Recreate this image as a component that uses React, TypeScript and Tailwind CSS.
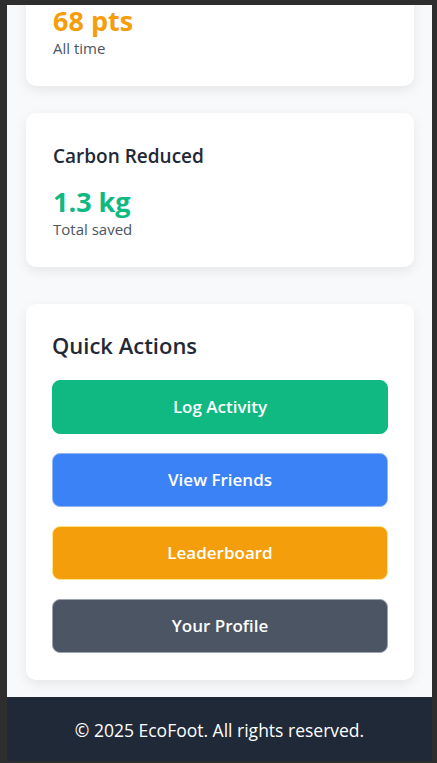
import React from "react";

function StatCard({ title, value, sub, color }: { title: string; value: string; sub: string; color: string }) {
  return (
    <div className="rounded-[10px] bg-white px-[27px] pt-[29px] pb-[27px] shadow-[0_4px_12px_rgba(0,0,0,0.08)]">
      <h3 className="text-[19px] leading-[29px] font-semibold text-[#1f2937]">{title}</h3>
      <div className={`mt-[14px] text-[27px] leading-[33px] font-bold ${color}`}>{value}</div>
      <div className="text-[15px] leading-[22px] text-[#4b5563]">{sub}</div>
    </div>
  );
}

export default function App() {
  const buttons = [
    { label: "Log Activity", cls: "bg-[#10b981] border-[#10b981]" },
    { label: "View Friends", cls: "bg-[#3b82f6] border-[#93b4f5]" },
    { label: "Leaderboard", cls: "bg-[#f59e0b] border-[#fde68a]" },
    { label: "Your Profile", cls: "bg-[#4b5563] border-[#9ca3af]" },
  ];
  return (
    <div
      className="h-[763px] w-[437px] overflow-hidden bg-[#2e2e2e] pt-[5px] pl-[7px] pr-[5px] pb-[2px]"
      style={{ fontFamily: '"Open Sans", "Noto Sans", sans-serif' }}
    >
      <div className="flex h-full flex-col overflow-hidden bg-[#f8f9fb]">
        <main className="flex-1 pl-[19px] pr-[18px]">
          <div className="-mt-[73px]">
            <StatCard title="Eco Points" value="68 pts" sub="All time" color="text-[#f59e0b]" />
          </div>
          <div className="mt-[27px]">
            <StatCard title="Carbon Reduced" value="1.3 kg" sub="Total saved" color="text-[#10b981]" />
          </div>
          <div className="mt-[37px] rounded-[10px] bg-white px-[26px] pt-[25px] pb-[27px] shadow-[0_4px_12px_rgba(0,0,0,0.08)]">
            <h2 className="text-[22px] leading-[32px] font-semibold text-[#1f2937]">Quick Actions</h2>
            <div className="mt-[19px] flex flex-col gap-[19px]">
              {buttons.map((b) => (
                <button
                  key={b.label}
                  className={`flex h-[54px] w-full items-center justify-center rounded-[8px] border text-[17px] font-semibold text-white ${b.cls}`}
                >
                  {b.label}
                </button>
              ))}
            </div>
          </div>
        </main>
        <footer className="flex h-[64px] shrink-0 items-center justify-center bg-[#1f2937] pt-[3px] text-[17.5px] text-white">
          © 2025 EcoFoot. All rights reserved.
        </footer>
      </div>
    </div>
  );
}
